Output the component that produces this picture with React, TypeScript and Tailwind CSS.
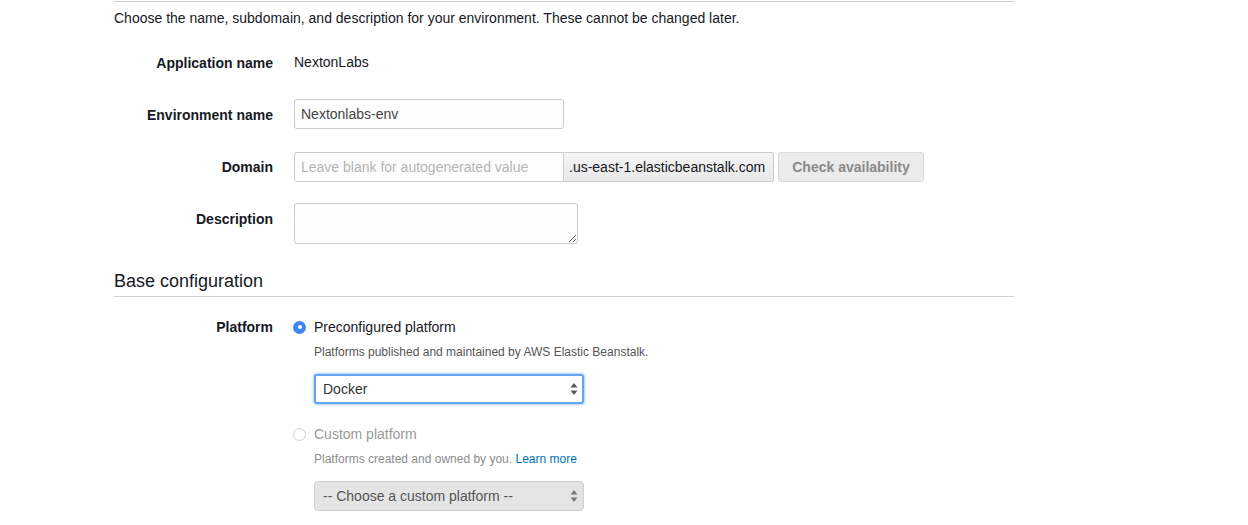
const font = { fontFamily: '"Liberation Sans", Arial, Helvetica, sans-serif' };

function Label({ children }: { children: React.ReactNode }) {
  return (
    <div className="text-right font-bold text-[14px] leading-[30px] text-[#16191f]">{children}</div>
  );
}

function Arrows({ color }: { color: string }) {
  return (
    <svg width="8" height="14" viewBox="0 0 8 14" className="absolute right-[6px] top-1/2 -translate-y-1/2 pointer-events-none">
      <path d="M4 1 L7.5 5.5 H0.5 Z" fill={color} />
      <path d="M4 13 L7.5 8.5 H0.5 Z" fill={color} />
    </svg>
  );
}

function Radio({ checked }: { checked: boolean }) {
  if (checked)
    return (
      <span className="w-[13px] h-[13px] rounded-full bg-[#3b86f7] flex items-center justify-center shrink-0">
        <span className="w-[4px] h-[4px] rounded-full bg-white" />
      </span>
    );
  return <span className="w-[13px] h-[13px] rounded-full border border-[#d0d0d0] bg-white shrink-0" />;
}

export default function App() {
  return (
    <div className="min-h-screen bg-white text-[#16191f] pl-[114px]" style={font}>
      <div className="w-[900px]">
        <div className="mt-[1px] border-t border-[#cfcfcf]" />
        <p className="mt-[6px] text-[14px] leading-[20px]">
          Choose the name, subdomain, and description for your environment. These cannot be changed later.
        </p>

        <div className="mt-[20px] grid grid-cols-[159px_1fr] gap-x-[21px] gap-y-[22px]">
          <Label>Application name</Label>
          <div className="text-[14px] leading-[30px] -mt-[1px]">NextonLabs</div>

          <Label>Environment name</Label>
          <div>
            <input
              defaultValue="Nextonlabs-env"
              className="w-[270px] h-[30px] -mt-[1px] border border-[#cccccc] rounded-[3px] bg-[#fdfdfd] px-[6px] text-[14px] text-[#444] outline-none"
            />
          </div>

          <Label>Domain</Label>
          <div className="flex items-center">
            <input
              placeholder="Leave blank for autogenerated value"
              className="w-[270px] h-[30px] border border-[#cccccc] rounded-l-[3px] bg-[#fdfdfd] px-[6px] text-[14px] placeholder-[#b5b5b5] outline-none"
            />
            <span className="h-[30px] w-[210px] border border-l-0 border-[#cccccc] rounded-r-[3px] bg-gradient-to-b from-[#f5f5f5] to-[#e8e8e8] px-[5px] text-[14px] leading-[28px] text-[#16191f] whitespace-nowrap">
              .us-east-1.elasticbeanstalk.com
            </span>
            <button className="ml-[4px] h-[30px] w-[146px] border border-[#d8d8d8] rounded-[3px] bg-[#ebebeb] text-[14px] font-bold text-[#8a8a8a]">
              Check availability
            </button>
          </div>

          <div className="text-right font-bold text-[14px] leading-[30px]">Description</div>
          <div>
            <textarea className="block w-[284px] h-[41px] -mt-[1px] border border-[#cccccc] rounded-[3px] bg-[#fdfdfd] outline-none" />
          </div>
        </div>

        <div className="mt-[25px] text-[18px] leading-[24px] pb-[3px] border-b border-[#cfcfcf]">Base configuration</div>

        <div className="mt-[20px] grid grid-cols-[159px_1fr] gap-x-[20px]">
          <div className="text-right font-bold text-[14px] leading-[20px]">Platform</div>
          <div>
            <div className="flex items-center gap-[8px] text-[14px] leading-[20px]">
              <Radio checked />
              <span>Preconfigured platform</span>
            </div>
            <div className="ml-[21px]">
              <p className="mt-[7px] text-[12px] leading-[16px] text-[#555]">
                Platforms published and maintained by AWS Elastic Beanstalk.
              </p>
              <div className="relative mt-[14px] w-[270px]">
                <select className="appearance-none w-full h-[30px] border-2 border-[#66a3f2] rounded-[3px] bg-white pl-[7px] text-[14px] text-[#333] outline-none shadow-[0_0_2px_1px_rgba(102,163,242,0.5)]">
                  <option>Docker</option>
                </select>
                <Arrows color="#555" />
              </div>
            </div>

            <div className="mt-[20px] flex items-center gap-[8px] text-[14px] leading-[20px] text-[#999]">
              <Radio checked={false} />
              <span>Custom platform</span>
            </div>
            <div className="ml-[21px]">
              <p className="mt-[7px] text-[12px] leading-[16px] text-[#8c8c8c]">
                Platforms created and owned by you. <a className="text-[#0073bb]">Learn more</a>
              </p>
              <div className="relative mt-[14px] w-[270px]">
                <select
                  disabled
                  className="appearance-none w-full h-[30px] border border-[#cfcfcf] rounded-[4px] bg-[#e4e4e4] pl-[8px] text-[14px] text-[#555] outline-none"
                >
                  <option>-- Choose a custom platform --</option>
                </select>
                <Arrows color="#777" />
              </div>
            </div>
          </div>
        </div>
      </div>
    </div>
  );
}
